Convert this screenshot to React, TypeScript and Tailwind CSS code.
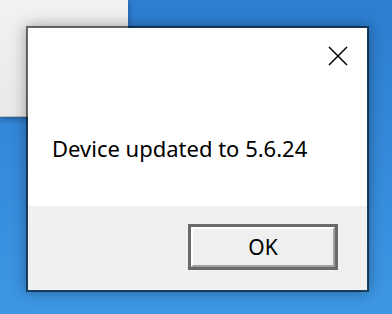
import React from "react";

const CloseIcon = () => (
  <svg width="20" height="20" viewBox="0 0 20 20" fill="none">
    <path d="M1 1 L19 19 M19 1 L1 19" stroke="#000" strokeWidth="1.5" />
  </svg>
);

const App = () => {
  return (
    <div className="relative w-[392px] h-[314px] overflow-hidden bg-gradient-to-b from-[#2d7dd1] to-[#3e97e5] font-['Noto_Sans',sans-serif]">
      {/* window behind */}
      <div className="absolute left-0 top-0 w-[128px] h-[117px] bg-gradient-to-b from-[#f2f2f2] to-[#e9e9e9] border-b border-[#bdbdbd] shadow-[0_2px_6px_rgba(0,0,0,0.35)]" />

      {/* message box */}
      <div className="absolute left-[26px] top-[26px] w-[343px] h-[266px] flex flex-col border-2 border-[rgba(0,0,0,0.55)] bg-white bg-clip-padding shadow-[0_0_14px_rgba(0,0,0,0.35)]">
        <div className="relative flex-1 bg-white">
          <button className="absolute right-[19px] top-[18px] w-5 h-5 flex items-center justify-center">
            <CloseIcon />
          </button>
          <p className="absolute left-[24px] top-[109px] text-[22px] leading-none text-black whitespace-nowrap">
            Device updated to 5.6.24
          </p>
        </div>
        <div className="h-[84px] bg-[#f0f0f0] flex justify-end pt-[18px] pr-[29px]">
          <div className="w-[150px] h-[46px] border-[3px] border-[#6a6a6a]">
            <div className="h-full w-full flex items-center justify-center border-2 border-t-white border-l-white border-r-[#a0a0a0] border-b-[#a0a0a0] bg-[#efefef] text-[21px] leading-none text-black">
              OK
            </div>
          </div>
        </div>
      </div>
    </div>
  );
};

export default App;
